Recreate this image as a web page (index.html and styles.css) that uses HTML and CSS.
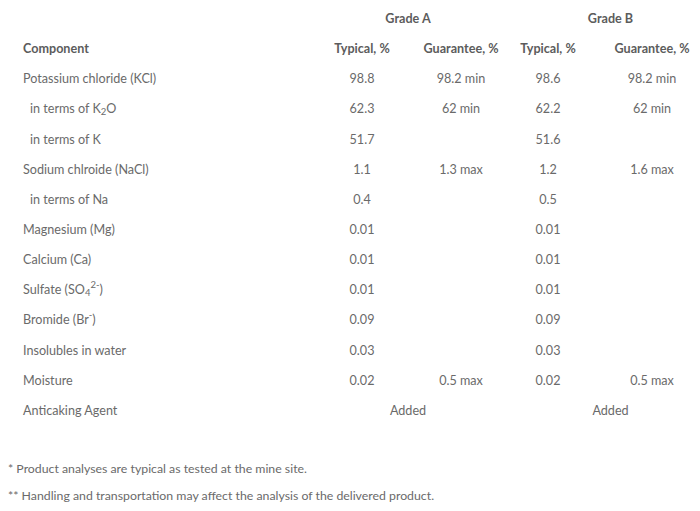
FILE: index.html
```html
<!DOCTYPE html>
<html lang="en">
<head>
<meta charset="utf-8">
<title>Product analysis</title>
<link rel="stylesheet" href="styles.css">
</head>
<body>
<div class="grid">
  <div class="cell"></div>
  <div class="cell head span2">Grade A</div>
  <div class="cell head span2 gradeb">Grade B</div>

  <div class="cell name head">Component</div>
  <div class="cell head">Typical, %</div>
  <div class="cell head">Guarantee, %</div>
  <div class="cell head">Typical, %</div>
  <div class="cell head lastcol">Guarantee, %</div>

  <div class="cell name">Potassium chloride (KCl)</div>
  <div class="cell">98.8</div><div class="cell">98.2 min</div><div class="cell">98.6</div><div class="cell lastcol">98.2 min</div>

  <div class="cell name sub">in terms of K<sub>2</sub>O</div>
  <div class="cell">62.3</div><div class="cell">62 min</div><div class="cell">62.2</div><div class="cell lastcol">62 min</div>

  <div class="cell name sub">in terms of K</div>
  <div class="cell">51.7</div><div class="cell"></div><div class="cell">51.6</div><div class="cell lastcol"></div>

  <div class="cell name">Sodium chlroide (NaCl)</div>
  <div class="cell">1.1</div><div class="cell">1.3 max</div><div class="cell">1.2</div><div class="cell lastcol">1.6 max</div>

  <div class="cell name sub">in terms of Na</div>
  <div class="cell">0.4</div><div class="cell"></div><div class="cell">0.5</div><div class="cell lastcol"></div>

  <div class="cell name">Magnesium (Mg)</div>
  <div class="cell">0.01</div><div class="cell"></div><div class="cell">0.01</div><div class="cell lastcol"></div>

  <div class="cell name">Calcium (Ca)</div>
  <div class="cell">0.01</div><div class="cell"></div><div class="cell">0.01</div><div class="cell lastcol"></div>

  <div class="cell name">Sulfate (SO<sub>4</sub><sup>2-</sup>)</div>
  <div class="cell">0.01</div><div class="cell"></div><div class="cell">0.01</div><div class="cell lastcol"></div>

  <div class="cell name">Bromide (Br<sup>-</sup>)</div>
  <div class="cell">0.09</div><div class="cell"></div><div class="cell">0.09</div><div class="cell lastcol"></div>

  <div class="cell name">Insolubles in water</div>
  <div class="cell">0.03</div><div class="cell"></div><div class="cell">0.03</div><div class="cell lastcol"></div>

  <div class="cell name">Moisture</div>
  <div class="cell">0.02</div><div class="cell">0.5 max</div><div class="cell">0.02</div><div class="cell lastcol">0.5 max</div>

  <div class="cell name">Anticaking Agent</div>
  <div class="cell span2">Added</div>
  <div class="cell span2 gradeb">Added</div>
</div>

<div class="notes">
  <p>* Product analyses are typical as tested at the mine site.</p>
  <p>** Handling and transportation may affect the analysis of the delivered product.</p>
</div>
</body>
</html>
```

FILE: styles.css
```css
html, body {
  margin: 0;
  padding: 0;
  background: #ffffff;
}

body {
  font-family: Lato, "Open Sans", sans-serif;
  font-size: 12.6px;
  color: #6a6a6a;
  width: 700px;
  overflow: hidden;
}

.grid {
  display: grid;
  grid-template-columns: 309px 106px 92px 82px 111px;
  grid-auto-rows: 30.15px;
  padding-top: 4px;
}

.cell {
  display: flex;
  align-items: center;
  justify-content: center;
  white-space: nowrap;
  line-height: 16px;
}

.name {
  justify-content: flex-start;
  padding-left: 23px;
}

.name.sub {
  padding-left: 30px;
}

.head {
  font-weight: 700;
  color: #5c5c5c;
}

.span2 {
  grid-column: span 2;
}

.gradeb {
  padding-left: 14px;
}

.lastcol {
  padding-left: 15px;
}

sub, sup {
  font-size: 9.5px;
  line-height: 0;
  position: relative;
  vertical-align: baseline;
}

sub {
  top: 3px;
}

sup {
  top: -5px;
}

.notes {
  padding: 0 0 0 8px;
  margin-top: 29px;
  font-size: 12.3px;
  color: #6a6a6a;
}

.notes p {
  margin: 0;
  line-height: 27px;
}
```
